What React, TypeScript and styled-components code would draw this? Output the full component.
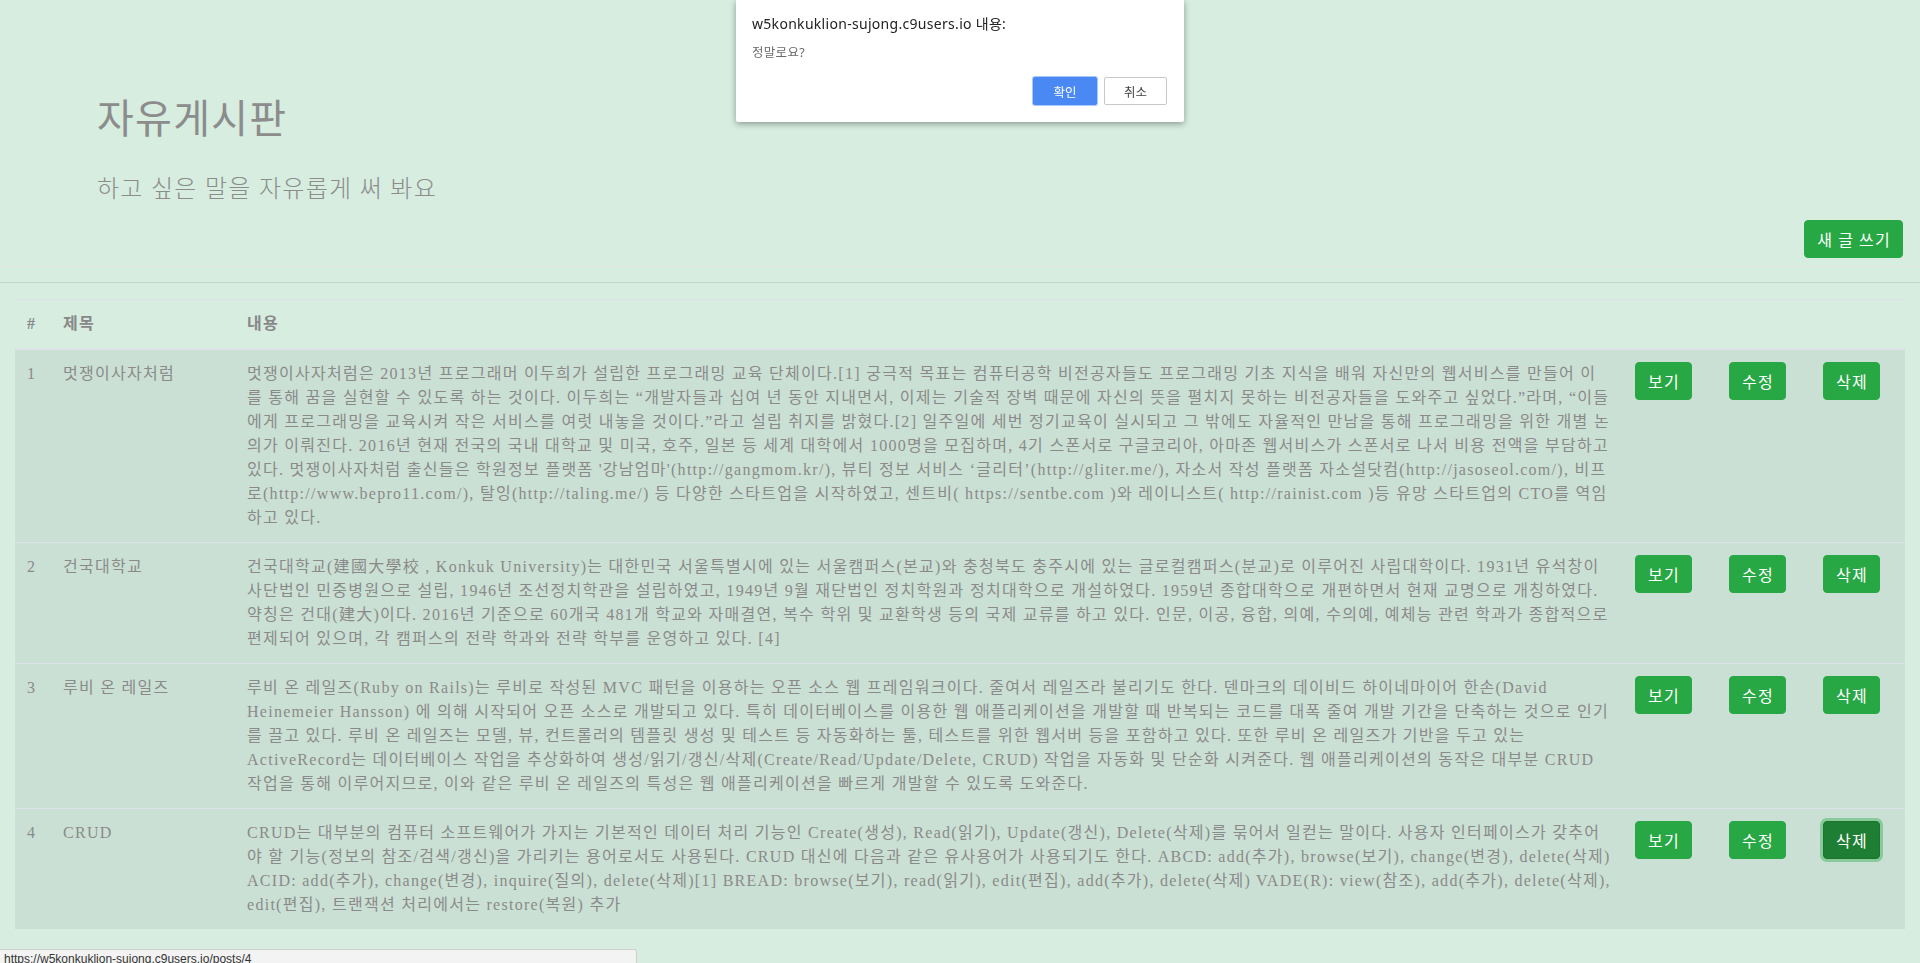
import React from 'react';
import styled, { createGlobalStyle, css } from 'styled-components';

const GlobalStyle = createGlobalStyle`
  html, body { margin: 0; padding: 0; background: #d6ede0; }
  body {
    font-family: "Liberation Serif", "Noto Sans CJK KR", serif;
    color: #8a8a8a;
    font-size: 16px;
    line-height: 1.5;
    letter-spacing: 0.08em;
  }
  * { box-sizing: border-box; }
`;

const Page = styled.div`
  min-height: 963px;
`;

const Header = styled.header`
  padding: 96px 97px 0 97px;
`;

const Title = styled.h1`
  margin: 0;
  font-size: 40px;
  line-height: 48px;
  font-weight: 400;
  color: #8c8c8c;
`;

const Lead = styled.p`
  margin: 27px 0 0 0;
  font-size: 24px;
  line-height: 36px;
  font-weight: 300;
  color: #8c8c8c;
`;

const Toolbar = styled.div`
  display: flex;
  justify-content: flex-end;
  padding: 13px 17px 8px 0;
  border-bottom: 1px solid #e2e7e4;
`;

const Divider = styled.hr`
  margin: 15px 0 0 0;
  border: 0;
  border-top: 1px solid #c2d8cb;
`;

const Button = styled.button<{ $active?: boolean }>`
  display: inline-block;
  font-family: "Noto Sans CJK KR", "Noto Sans", sans-serif;
  font-size: 16px;
  line-height: 24px;
  letter-spacing: 0.08em;
  padding: 6px 11px 6px 12px;
  color: #fff;
  background: #28a745;
  border: 1px solid #28a745;
  border-radius: 4px;
  cursor: pointer;
  white-space: nowrap;
  ${(p) =>
    p.$active &&
    css`
      background: #1e7e34;
      border-color: #1c7430;
      box-shadow: 0 0 0 3px rgba(72, 180, 97, 0.5);
    `}
`;

const Table = styled.table`
  margin: 16px 15px 0 15px;
  width: calc(100% - 30px);
  border-collapse: collapse;
  table-layout: fixed;
`;

const Th = styled.th`
  padding: 12px;
  text-align: left;
  vertical-align: bottom;
  border-top: 1px solid #dee2e6;
  border-bottom: 2px solid #dee2e6;
  font-weight: 700;
  color: #888;
`;

const Td = styled.td`
  padding: 12px;
  vertical-align: top;
  border-top: 1px solid #dee2e6;
  background: rgba(0, 0, 0, 0.05);
  color: #8a8a8a;
`;

const Dialog = styled.div`
  position: fixed;
  top: 0;
  left: 736px;
  width: 448px;
  height: 122px;
  background: #fff;
  border-radius: 0 0 2px 2px;
  box-shadow: 0 2px 6px rgba(0, 0, 0, 0.35);
  padding: 14px 16px 0 16px;
  font-family: "Noto Sans", "Noto Sans CJK KR", sans-serif;
  letter-spacing: 0.3px;
  display: flex;
  flex-direction: column;
`;

const DialogTitle = styled.div`
  font-size: 14px;
  line-height: 20px;
  color: #222;
`;

const DialogMessage = styled.div`
  margin-top: 10px;
  font-size: 12.5px;
  line-height: 18px;
  color: #6b6b6b;
`;

const DialogActions = styled.div`
  display: flex;
  justify-content: flex-end;
  gap: 7px;
  margin-top: 15px;
  padding-right: 1px;
`;

const DialogButton = styled.button<{ $primary?: boolean }>`
  font-family: "Noto Sans CJK KR", "Noto Sans", sans-serif;
  font-size: 12.5px;
  height: 28px;
  min-width: 63px;
  padding: 0 14px;
  border-radius: 2px;
  cursor: pointer;
  ${(p) =>
    p.$primary
      ? css`
          background: #4a89f3;
          color: #fff;
          border: 1px solid #4a89f3;
          box-shadow: 0 0 0 1px #a9c7fb;
          min-width: 64px;
        `
      : css`
          background: #fff;
          color: #444;
          border: 1px solid #c8c8c8;
        `}
`;

const StatusBubble = styled.div`
  position: fixed;
  left: 0;
  top: 949px;
  width: 637px;
  height: 22px;
  background: #f3f3f3;
  border: 1px solid #cfcfcf;
  border-left: 0;
  border-top-right-radius: 3px;
  padding: 1px 4px;
  font-family: "Liberation Sans", "Noto Sans", sans-serif;
  font-size: 12px;
  line-height: 16px;
  letter-spacing: 0;
  color: #333;
`;

type Post = { id: number; title: string; content: string };

const posts: Post[] = [
  {
    id: 1,
    title: '멋쟁이사자처럼',
    content:
      "멋쟁이사자처럼은 2013년 프로그래머 이두희가 설립한 프로그래밍 교육 단체이다.[1] 궁극적 목표는 컴퓨터공학 비전공자들도 프로그래밍 기초 지식을 배워 자신만의 웹서비스를 만들어 이를 통해 꿈을 실현할 수 있도록 하는 것이다. 이두희는 “개발자들과 십여 년 동안 지내면서, 이제는 기술적 장벽 때문에 자신의 뜻을 펼치지 못하는 비전공자들을 도와주고 싶었다.”라며, “이들에게 프로그래밍을 교육시켜 작은 서비스를 여럿 내놓을 것이다.”라고 설립 취지를 밝혔다.[2] 일주일에 세번 정기교육이 실시되고 그 밖에도 자율적인 만남을 통해 프로그래밍을 위한 개별 논의가 이뤄진다. 2016년 현재 전국의 국내 대학교 및 미국, 호주, 일본 등 세계 대학에서 1000명을 모집하며, 4기 스폰서로 구글코리아, 아마존 웹서비스가 스폰서로 나서 비용 전액을 부담하고 있다. 멋쟁이사자처럼 출신들은 학원정보 플랫폼 '강남엄마'(http://gangmom.kr/), 뷰티 정보 서비스 ‘글리터’(http://gliter.me/), 자소서 작성 플랫폼 자소설닷컴(http://jasoseol.com/), 비프로(http://www.bepro11.com/), 탈잉(http://taling.me/) 등 다양한 스타트업을 시작하였고, 센트비( https://sentbe.com )와 레이니스트( http://rainist.com )등 유망 스타트업의 CTO를 역임하고 있다.",
  },
  {
    id: 2,
    title: '건국대학교',
    content:
      '건국대학교(建國大學校 , Konkuk University)는 대한민국 서울특별시에 있는 서울캠퍼스(본교)와 충청북도 충주시에 있는 글로컬캠퍼스(분교)로 이루어진 사립대학이다. 1931년 유석창이 사단법인 민중병원으로 설립, 1946년 조선정치학관을 설립하였고, 1949년 9월 재단법인 정치학원과 정치대학으로 개설하였다. 1959년 종합대학으로 개편하면서 현재 교명으로 개칭하였다. 약칭은 건대(建大)이다. 2016년 기준으로 60개국 481개 학교와 자매결연, 복수 학위 및 교환학생 등의 국제 교류를 하고 있다. 인문, 이공, 융합, 의예, 수의예, 예체능 관련 학과가 종합적으로 편제되어 있으며, 각 캠퍼스의 전략 학과와 전략 학부를 운영하고 있다. [4]',
  },
  {
    id: 3,
    title: '루비 온 레일즈',
    content:
      '루비 온 레일즈(Ruby on Rails)는 루비로 작성된 MVC 패턴을 이용하는 오픈 소스 웹 프레임워크이다. 줄여서 레일즈라 불리기도 한다. 덴마크의 데이비드 하이네마이어 한손(David Heinemeier Hansson) 에 의해 시작되어 오픈 소스로 개발되고 있다. 특히 데이터베이스를 이용한 웹 애플리케이션을 개발할 때 반복되는 코드를 대폭 줄여 개발 기간을 단축하는 것으로 인기를 끌고 있다. 루비 온 레일즈는 모델, 뷰, 컨트롤러의 템플릿 생성 및 테스트 등 자동화하는 툴, 테스트를 위한 웹서버 등을 포함하고 있다. 또한 루비 온 레일즈가 기반을 두고 있는 ActiveRecord는 데이터베이스 작업을 추상화하여 생성/읽기/갱신/삭제(Create/Read/Update/Delete, CRUD) 작업을 자동화 및 단순화 시켜준다. 웹 애플리케이션의 동작은 대부분 CRUD 작업을 통해 이루어지므로, 이와 같은 루비 온 레일즈의 특성은 웹 애플리케이션을 빠르게 개발할 수 있도록 도와준다.',
  },
  {
    id: 4,
    title: 'CRUD',
    content:
      'CRUD는 대부분의 컴퓨터 소프트웨어가 가지는 기본적인 데이터 처리 기능인 Create(생성), Read(읽기), Update(갱신), Delete(삭제)를 묶어서 일컫는 말이다. 사용자 인터페이스가 갖추어야 할 기능(정보의 참조/검색/갱신)을 가리키는 용어로서도 사용된다. CRUD 대신에 다음과 같은 유사용어가 사용되기도 한다. ABCD: add(추가), browse(보기), change(변경), delete(삭제) ACID: add(추가), change(변경), inquire(질의), delete(삭제)[1] BREAD: browse(보기), read(읽기), edit(편집), add(추가), delete(삭제) VADE(R): view(참조), add(추가), delete(삭제), edit(편집), 트랜잭션 처리에서는 restore(복원) 추가',
  },
];

export default function App() {
  return (
    <Page>
      <GlobalStyle />
      <Header>
        <Title>자유게시판</Title>
        <Lead>하고 싶은 말을 자유롭게 써 봐요</Lead>
      </Header>
      <Toolbar>
        <Button>새 글 쓰기</Button>
      </Toolbar>
      <Divider />
      <Table>
        <colgroup>
          <col style={{ width: 36 }} />
          <col style={{ width: 184 }} />
          <col />
          <col style={{ width: 94 }} />
          <col style={{ width: 94 }} />
          <col style={{ width: 94 }} />
        </colgroup>
        <thead>
          <tr>
            <Th>#</Th>
            <Th>제목</Th>
            <Th>내용</Th>
            <Th />
            <Th />
            <Th />
          </tr>
        </thead>
        <tbody>
          {posts.map((p) => (
            <tr key={p.id}>
              <Td>{p.id}</Td>
              <Td>{p.title}</Td>
              <Td>{p.content}</Td>
              <Td>
                <Button>보기</Button>
              </Td>
              <Td>
                <Button>수정</Button>
              </Td>
              <Td>
                <Button $active={p.id === 4}>삭제</Button>
              </Td>
            </tr>
          ))}
        </tbody>
      </Table>
      <Dialog>
        <DialogTitle>w5konkuklion-sujong.c9users.io 내용:</DialogTitle>
        <DialogMessage>정말로요?</DialogMessage>
        <DialogActions>
          <DialogButton $primary>확인</DialogButton>
          <DialogButton>취소</DialogButton>
        </DialogActions>
      </Dialog>
      <StatusBubble>https://w5konkuklion-sujong.c9users.io/posts/4</StatusBubble>
    </Page>
  );
}
